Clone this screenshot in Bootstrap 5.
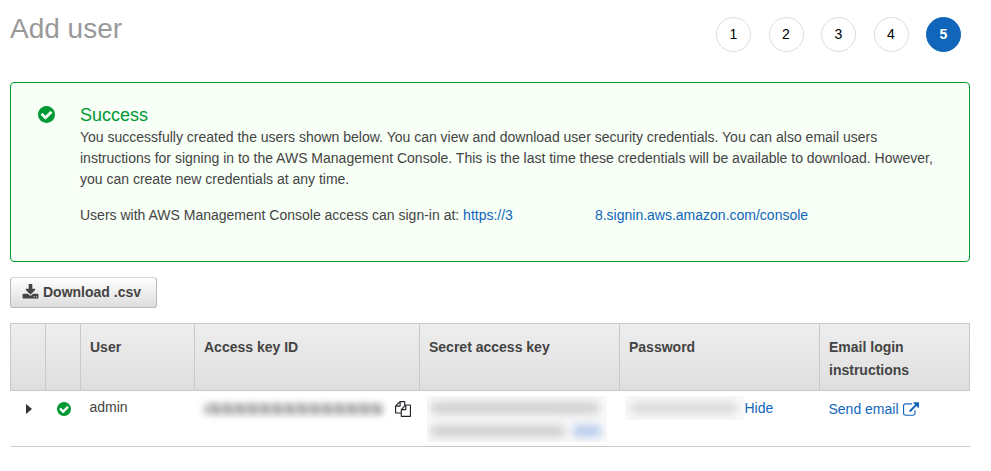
<!DOCTYPE html>
<html lang="en">
<head>
<meta charset="utf-8">
<meta name="viewport" content="width=device-width, initial-scale=1">
<title>Add user</title>
<link rel="stylesheet" href="https://cdn.jsdelivr.net/npm/bootstrap@5.3.0/dist/css/bootstrap.min.css">
<style>
  body { font-family: "Liberation Sans", Arial, sans-serif; font-size: 14px; line-height: 21px; color: #444; background: #fff; }
  a { color: #1166bb; text-decoration: none; }
  a:hover { text-decoration: underline; }
  svg { fill: currentColor; display: block; flex: none; }
  .page { padding: 8px 21px 20px 10px; }
  .page-title { font-size: 28px; line-height: 42px; color: #999; font-weight: 400; }
  .wizard { width: 245px; margin: 9px 9px 30px 0; }
  .wizard-step { width: 35px; height: 35px; border: 1px solid #ddd; color: #000; }
  .wizard-step.current { background: #1166bb; border-color: #1166bb; color: #fff; font-weight: 700; }
  .success-box { border: 1px solid #093; border-radius: 4px; background: #f7fff7; padding: 20px 24px 35px 27px; margin-bottom: 15px; gap: 25px; color: #444; }
  .success-box h2 { font-size: 18px; line-height: 24px; color: #093; font-weight: 400; }
  .success-box p { margin-bottom: 15px; }
  .ok { color: #093; }
  .success-box .ok { margin-top: 3px; }
  .link-gap { display: inline-block; width: 82px; }
  .btn-csv, .btn-csv:hover { font-size: 14px; line-height: 21px; font-weight: 700; color: #444; padding: 4px 15px 4px 11px; border: 1px solid #b8b8b8; border-top-color: #d5d5d5; border-radius: 3px; background: linear-gradient(#fff, #ddd); }
  .users { table-layout: fixed; width: 100%; border-collapse: collapse; margin-top: 15px; }
  .users th { border: 1px solid #c9c9c9; padding: 12px 9px 8px; line-height: 23px; vertical-align: top; }
  .users thead { background: linear-gradient(#eee, #dedede); }
  .users td { border-bottom: 1px solid #c9c9c9; padding: 6px 9px 4px; vertical-align: top; }
  .users .cell-icon { padding: 8px 0 0 1px; }
  .c-icon { width: 35px; } .c-user { width: 114px; } .c-key { width: 225px; } .c-wide { width: 200px; } .c-mail { width: 150px; }
  .expand { height: 20px; }
  .status { height: 20px; }
  .cell-line { height: 24px; }
  .users .cell-secret { padding: 5px 13px 4px 7px; }
  .users .cell-pass { padding: 5px 9px 4px 5px; }
  .smudge { background: #f9f9f9; overflow: hidden; }
  .smudge-line { height: 23px; padding-left: 4px; }
  .smudge-pass { width: 120px; height: 24px; padding-left: 6px; }
  .redacted { display: block; height: 12px; border-radius: 4px; filter: blur(4px); background: #d0d0d0; }
  .redacted.key { width: 180px; filter: blur(3px); background: repeating-linear-gradient(75deg, #a8a8a8 0 3px, #d4d4d4 5px 7px, #b4b4b4 9px 12px); }
  .redacted.line { width: 168px; }
  .redacted.part { width: 134px; }
  .redacted.action { width: 28px; background: #b9ccec; }
  .redacted.pass { width: 106px; background: #dadada; }
</style>
<script src="https://cdn.jsdelivr.net/npm/bootstrap@5.3.0/dist/js/bootstrap.bundle.min.js"></script>
</head>
<body>
<svg class="d-none" aria-hidden="true">
  <symbol id="i-check" viewBox="0 128 1536 1536"><path d="M1284 734q0-28-18-46l-91-90q-19-19-45-19t-45 19l-408 407-226-226q-19-19-45-19t-45 19l-91 90q-18 18-18 46 0 27 18 45l362 362q19 19 45 19 27 0 46-19l543-543q18-18 18-45zm252 162q0 209-103 385.500t-279.500 279.500-385.500 103-385.500-103-279.500-279.500-103-385.500 103-385.500 279.500-279.500 385.500-103 385.500 103 279.500 279.500 103 385.500z"/></symbol>
</svg>
<div class="container-fluid page">
  <header class="d-flex justify-content-between align-items-start">
    <h1 class="page-title mb-0">Add user</h1>
    <div class="wizard d-flex justify-content-between">
      <span class="wizard-step rounded-circle d-flex align-items-center justify-content-center">1</span>
      <span class="wizard-step rounded-circle d-flex align-items-center justify-content-center">2</span>
      <span class="wizard-step rounded-circle d-flex align-items-center justify-content-center">3</span>
      <span class="wizard-step rounded-circle d-flex align-items-center justify-content-center">4</span>
      <span class="wizard-step current rounded-circle d-flex align-items-center justify-content-center" aria-current="step">5</span>
    </div>
  </header>

  <main>
    <section class="success-box d-flex" role="status">
      <svg class="ok" width="17" height="17" aria-hidden="true"><use href="#i-check"/></svg>
      <div>
        <h2 class="mb-0">Success</h2>
        <p>You successfully created the users shown below. You can view and download user security credentials. You can also email users instructions for signing in to the AWS Management Console. This is the last time these credentials will be available to download. However, you can create new credentials at any time.</p>
        <p class="mb-0">Users with AWS Management Console access can sign-in at: <a href="#">https://3<span class="link-gap"></span>8.signin.aws.amazon.com/console</a></p>
      </div>
    </section>

    <button type="button" class="btn btn-csv d-inline-flex align-items-center gap-1">
      <svg width="17" height="17" viewBox="0 0 1792 1792" aria-hidden="true"><path d="M1344 1344q0-26-19-45t-45-19-45 19-19 45 19 45 45 19 45-19 19-45zm256 0q0-26-19-45t-45-19-45 19-19 45 19 45 45 19 45-19 19-45zm128-224v320q0 40-28 68t-68 28h-1472q-40 0-68-28t-28-68v-320q0-40 28-68t68-28h465l135 136q58 56 136 56t136-56l136-136h464q40 0 68 28t28 68zm-325-569q17 41-14 70l-448 448q-18 19-45 19t-45-19l-448-448q-31-29-14-70 17-39 59-39h256v-448q0-26 19-45t45-19h256q26 0 45 19t19 45v448h256q42 0 59 39z"/></svg>
      Download .csv
    </button>

    <table class="users">
      <colgroup><col class="c-icon"><col class="c-icon"><col class="c-user"><col class="c-key"><col class="c-wide"><col class="c-wide"><col class="c-mail"></colgroup>
      <thead>
        <tr><th></th><th></th><th scope="col">User</th><th scope="col">Access key ID</th><th scope="col">Secret access key</th><th scope="col">Password</th><th scope="col">Email login instructions</th></tr>
      </thead>
      <tbody>
        <tr>
          <td class="cell-icon"><button type="button" class="btn expand w-100 p-0 border-0 d-flex align-items-center justify-content-center" aria-label="Expand"><svg width="6" height="10" viewBox="0 0 6 10"><path fill="#333" d="M0 0l6 5-6 5z"/></svg></button></td>
          <td class="cell-icon"><div class="status d-flex justify-content-center align-items-center"><svg class="ok" width="14" height="14" aria-hidden="true"><use href="#i-check"/></svg></div></td>
          <td>admin</td>
          <td>
            <div class="cell-line d-flex align-items-center justify-content-between">
              <span class="redacted key"></span>
              <button type="button" class="btn p-0 border-0" aria-label="Copy"><svg width="16" height="16" viewBox="0 0 1792 1792" fill="#444"><path d="M1696 384q40 0 68 28t28 68v1216q0 40-28 68t-68 28h-960q-40 0-68-28t-28-68v-288h-544q-40 0-68-28t-28-68v-672q0-40 20-88t48-76l408-408q28-28 76-48t88-20h416q40 0 68 28t28 68v328q68-40 128-40h416zm-544 213l-299 299h299v-299zm-640-384l-299 299h299v-299zm196 647l316-316v-416h-384v416q0 40-28 68t-68 28h-416v640h512v-256q0-40 20-88t48-76zm956 804v-1152h-384v416q0 40-28 68t-68 28h-416v640h896z"/></svg></button>
            </div>
          </td>
          <td class="cell-secret">
            <div class="smudge">
              <div class="smudge-line d-flex align-items-center"><span class="redacted line"></span></div>
              <div class="smudge-line d-flex align-items-center gap-2"><span class="redacted part"></span><span class="redacted action"></span></div>
            </div>
          </td>
          <td class="cell-pass"><div class="d-flex align-items-center"><span class="smudge smudge-pass d-flex align-items-center"><span class="redacted pass"></span></span><a href="#">Hide</a></div></td>
          <td><a href="#" class="cell-line d-flex align-items-center gap-1"><span>Send email</span><svg width="16" height="14" viewBox="0 0 1792 1536" aria-hidden="true"><path d="M1408 928v320q0 119-84.500 203.500t-203.500 84.500h-832q-119 0-203.500-84.500t-84.500-203.500v-832q0-119 84.500-203.500t203.500-84.500h704q14 0 23 9t9 23v64q0 14-9 23t-23 9h-704q-66 0-113 47t-47 113v832q0 66 47 113t113 47h832q66 0 113-47t47-113v-320q0-14 9-23t23-9h64q14 0 23 9t9 23zm384-864v512q0 26-19 45t-45 19-45-19l-176-176-652 652q-10 10-23 10t-23-10l-114-114q-10-10-10-23t10-23l652-652-176-176q-19-19-19-45t19-45 45-19h512q26 0 45 19t19 45z"/></svg></a></td>
        </tr>
      </tbody>
    </table>
  </main>
</div>
</body>
</html>
